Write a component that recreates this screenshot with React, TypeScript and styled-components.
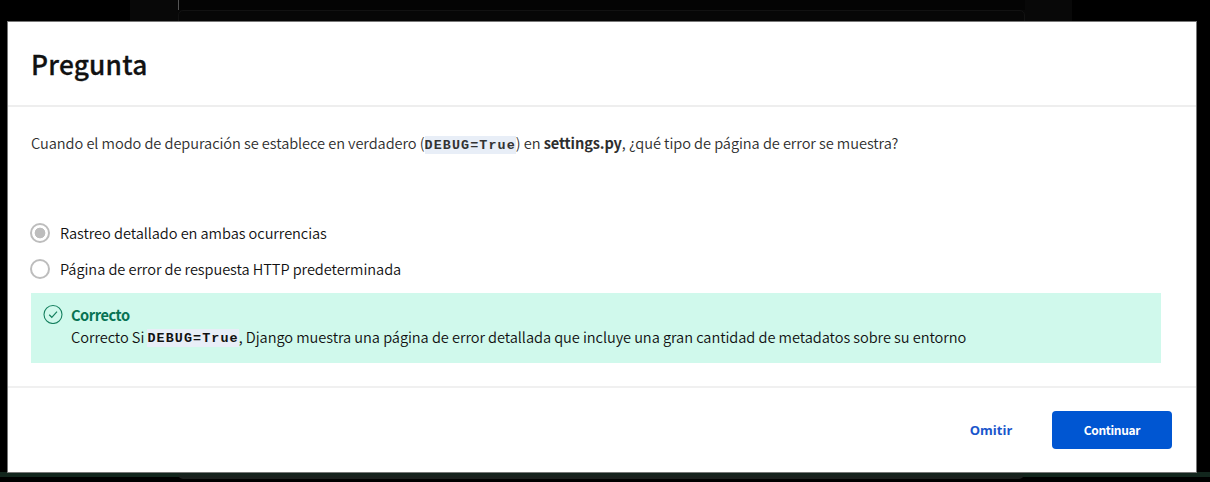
import React from 'react';
import styled, { createGlobalStyle } from 'styled-components';

const sans = '"Source Sans Pro", "Noto Sans CJK SC", "Noto Sans", sans-serif';

const GlobalStyle = createGlobalStyle`
  *, *::before, *::after { box-sizing: border-box; }
  body { margin: 0; background: #000; overflow: hidden; }
`;

const Screen = styled.div`
  position: relative;
  height: 482px;
  padding: 22px 14px 10px 8px;
  background: #000;
  overflow: hidden;
  font-family: ${sans};
`;

const DimmedPage = styled.div`
  position: absolute;
  top: 0;
  left: 130px;
  width: 942px;
  height: 24px;
  padding: 0 47px 0 48px;
  background: #080808;
`;

const DimmedBar = styled.div`
  height: 10px;
  border-left: 1px solid #555;
  background: #040404;
`;

const DimmedCard = styled.div`
  height: 30px;
  border: 1px solid #121212;
  border-radius: 5px 5px 0 0;
  background: #070707;
`;

const DimmedStrip = styled.div`
  position: absolute;
  left: 0;
  right: 0;
  bottom: 5px;
  height: 5px;
  background: #12261d;
`;

const DimmedCardEnd = styled.div`
  position: absolute;
  left: 178px;
  width: 846px;
  bottom: 3px;
  height: 6px;
  border-radius: 0 0 5px 5px;
  background: linear-gradient(#13241d, #1d1f1e);
`;

const Dialog = styled.section`
  position: relative;
  display: flex;
  flex-direction: column;
  height: 450px;
  background: #fff;
  box-shadow: 0 0 0 1px #777;
`;

const Header = styled.header`
  height: 85px;
  padding: 19px 23px 0;
  border-bottom: 2px solid #eee;
`;

const Title = styled.h1`
  margin: 0;
  font-size: 26.3px;
  line-height: 46px;
  font-weight: 500;
  letter-spacing: 0.2px;
  -webkit-text-stroke: 0.3px #111;
  color: #111;
`;

const Body = styled.div`
  flex: 1;
  padding: 24px 35px 0 23px;
`;

const Question = styled.p`
  display: flex;
  align-items: center;
  margin: 0;
  height: 24px;
  font-size: 14.6px;
  font-weight: 350;
  line-height: 24px;
  letter-spacing: -0.065px;
  color: #2e2e2e;
  white-space: pre;
`;

const Filename = styled.b`
  font-weight: 700;
  letter-spacing: -0.13px;
`;

const Code = styled.code<{ $tone?: string }>`
  display: inline-block;
  height: 18px;
  margin-top: 3px;
  font: 700 13.4px/19px "Courier New", "Liberation Mono", monospace;
  letter-spacing: 1.09px;
  background: #e8eef7;
  color: ${(p) => p.$tone ?? '#333'};
`;

const Options = styled.div`
  display: flex;
  flex-direction: column;
  margin: 60px 0 0 -1px;
`;

const Option = styled.label`
  display: flex;
  align-items: center;
  height: 36px;
  font-size: 14.6px;
  font-weight: 350;
  line-height: 24px;
  letter-spacing: -0.065px;
  color: #111;
  white-space: pre;
`;

const Radio = styled.span<{ $checked?: boolean }>`
  width: 20px;
  height: 20px;
  margin: 0 10px 1px 0;
  border: 2px solid #bdbdbd;
  border-radius: 50%;
  background: ${(p) => (p.$checked ? 'radial-gradient(circle, #bdbdbd 5px, #fff 5.7px)' : '#fff')};
`;

const Feedback = styled.div`
  display: flex;
  height: 70px;
  margin-top: 6px;
  padding: 11px 12px 0;
  background: #d0f9ec;
`;

const FeedbackText = styled.div`
  margin: -1px 0 0 8px;
  font-size: 14.6px;
  font-weight: 350;
  line-height: 23px;
  letter-spacing: -0.06px;
  color: #111;
`;

const FeedbackTitle = styled.div`
  font-weight: 700;
  letter-spacing: -0.45px;
  color: #077353;
  height: 22px;
`;

const FeedbackLine = styled.div`
  display: flex;
  align-items: center;
  height: 23px;
  white-space: pre;
`;

const Footer = styled.footer`
  display: flex;
  justify-content: flex-end;
  height: 86px;
  padding: 23px 24px 0;
  border-top: 2px solid #f0f0f0;
`;

const Button = styled.button<{ $primary?: boolean }>`
  width: ${(p) => (p.$primary ? 120 : 122)}px;
  height: 38px;
  padding: 0;
  border: 0;
  border-radius: 4px;
  background: ${(p) => (p.$primary ? '#0056d2' : 'transparent')};
  color: ${(p) => (p.$primary ? '#fff' : '#1a56cc')};
  font: ${(p) => (p.$primary ? `700 12px/38px ${sans}` : '700 13px/38px "Open Sans", sans-serif')};
  letter-spacing: ${(p) => (p.$primary ? '-0.35px' : '0')};
`;

const CheckIcon = () => (
  <svg width="20" height="20" viewBox="0 0 20 20" fill="none" stroke="#16805f">
    <circle cx="10" cy="10.5" r="9" strokeWidth="1.1" />
    <path d="M6.2 10.8l2.6 2.5L14 7.7" strokeWidth="1.2" />
  </svg>
);

export default function App() {
  return (
    <>
      <GlobalStyle />
      <Screen>
        <DimmedPage>
          <DimmedBar />
          <DimmedCard />
        </DimmedPage>
        <DimmedStrip />
        <DimmedCardEnd />
        <Dialog role="dialog">
          <Header>
            <Title>Pregunta</Title>
          </Header>
          <Body>
            <Question>
              <span>Cuando el modo de depuración se establece en verdadero (</span>
              <Code>DEBUG=True</Code>
              <span>) en </span>
              <Filename>settings.py</Filename>
              <span>, ¿qué tipo de página de error se muestra?</span>
            </Question>
            <Options>
              <Option>
                <Radio $checked />
                <span>Rastreo detallado en ambas ocurrencias</span>
              </Option>
              <Option>
                <Radio />
                <span>Página de error de respuesta HTTP predeterminada</span>
              </Option>
            </Options>
            <Feedback>
              <CheckIcon />
              <FeedbackText>
                <FeedbackTitle>Correcto</FeedbackTitle>
                <FeedbackLine>
                  <span>Correcto Si </span>
                  <Code $tone="#111">DEBUG=True</Code>
                  <span>, Django muestra una página de error detallada que incluye una gran cantidad de metadatos sobre su entorno</span>
                </FeedbackLine>
              </FeedbackText>
            </Feedback>
          </Body>
          <Footer>
            <Button>Omitir</Button>
            <Button $primary>Continuar</Button>
          </Footer>
        </Dialog>
      </Screen>
    </>
  );
}
